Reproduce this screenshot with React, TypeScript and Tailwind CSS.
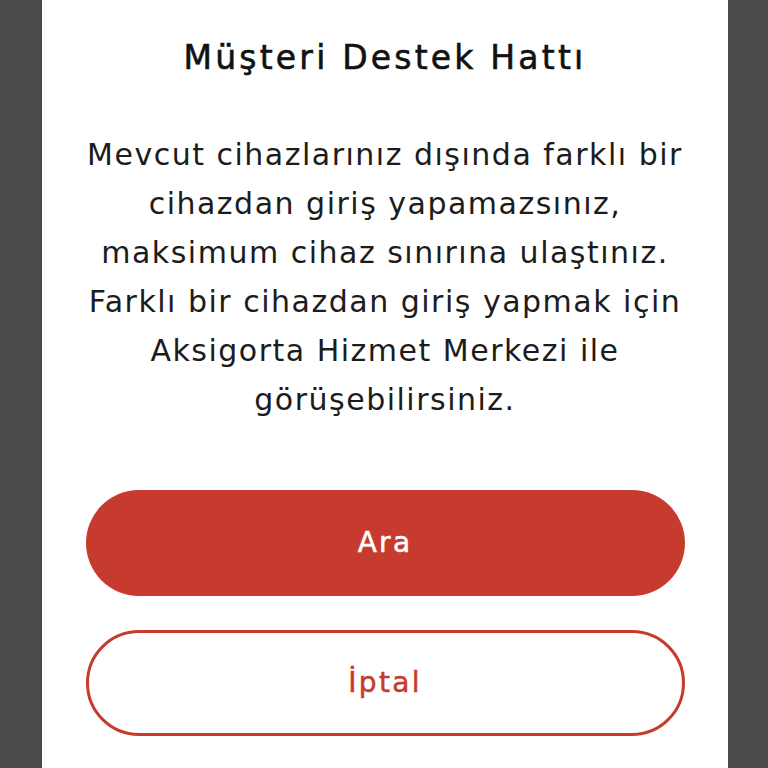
import React from "react";

export default function App() {
  const font = { fontFamily: "'DejaVu Sans', 'Noto Sans', sans-serif" };
  return (
    <div className="h-[768px] w-[768px] overflow-hidden bg-[#4a4a4a]" style={font}>
      <div className="ml-[42px] flex h-full w-[686px] flex-col items-center bg-white">
        <h1 className="mt-[36px] whitespace-nowrap text-[33px] font-normal leading-[44px] tracking-[3.2px] text-[#111111] [-webkit-text-stroke:0.6px_#111111]">
          Müşteri Destek Hattı
        </h1>
        <p className="mt-[50px] whitespace-nowrap text-center text-[30px] leading-[49px] tracking-[1.5px] text-[#1c1c1c]">
          Mevcut cihazlarınız dışında farklı bir
          <br />
          cihazdan giriş yapamazsınız,
          <br />
          maksimum cihaz sınırına ulaştınız.
          <br />
          Farklı bir cihazdan giriş yapmak için
          <br />
          Aksigorta Hizmet Merkezi ile
          <br />
          görüşebilirsiniz.
        </p>
        <div className="mt-auto mb-[32px] flex w-[599px] flex-col gap-[34px]">
          <button className="flex h-[106px] items-center justify-center rounded-full bg-[#c63b2d] text-[28px] font-normal tracking-[2.3px] text-white [-webkit-text-stroke:0.5px_#ffffff]">
            Ara
          </button>
          <button className="flex h-[106px] items-center justify-center rounded-full border-[3px] border-[#c63b2d] bg-white text-[28px] font-normal tracking-[2.3px] text-[#c63b2d] [-webkit-text-stroke:0.5px_#c63b2d]">
            İptal
          </button>
        </div>
      </div>
    </div>
  );
}
